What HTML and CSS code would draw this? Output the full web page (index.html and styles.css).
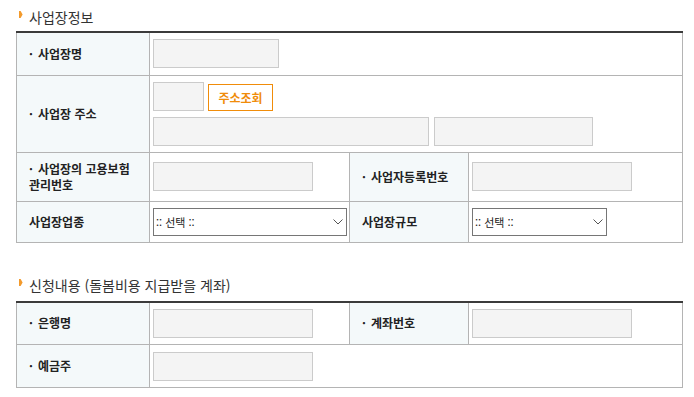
FILE: index.html
```html
<!DOCTYPE html>
<html lang="ko">
<head>
<meta charset="utf-8">
<title>사업장정보</title>
<link rel="stylesheet" href="styles.css">
</head>
<body>
<div class="page">
  <h2 class="sec-title"><svg class="mark" width="4" height="7" viewBox="0 0 4 7"><path d="M0 0H1.6L3.6 3.5L1.6 7H0Z" fill="#f39a2c"/></svg>사업장정보</h2>
  <table class="form">
    <colgroup><col class="c1"><col class="c2"><col class="c3"><col class="c4"></colgroup>
    <tr class="r1 first">
      <th><span class="dot">·</span>사업장명</th>
      <td colspan="3"><input class="inp w-name" type="text"></td>
    </tr>
    <tr class="r2">
      <th><span class="dot">·</span>사업장 주소</th>
      <td colspan="3">
        <div class="addr">
          <div class="addr-line"><input class="inp w-zip" type="text"><button class="btn-find" type="button">주소조회</button></div>
          <div class="addr-line"><input class="inp w-addr1" type="text"><input class="inp w-addr2" type="text"></div>
        </div>
      </td>
    </tr>
    <tr class="r3">
      <th><span class="dot">·</span>사업장의 고용보험<br>관리번호</th>
      <td><input class="inp w-mid" type="text"></td>
      <th><span class="dot">·</span>사업자등록번호</th>
      <td><input class="inp w-mid" type="text"></td>
    </tr>
    <tr class="r4">
      <th>사업장업종</th>
      <td><div class="sel w-sel1"><select><option>:: 선택 ::</option></select><svg class="chev" width="10" height="6" viewBox="0 0 10 6"><path d="M0.5 0.5L5 5L9.5 0.5" fill="none" stroke="#555" stroke-width="1"/></svg></div></td>
      <th>사업장규모</th>
      <td><div class="sel w-sel2"><select><option>:: 선택 ::</option></select><svg class="chev" width="10" height="6" viewBox="0 0 10 6"><path d="M0.5 0.5L5 5L9.5 0.5" fill="none" stroke="#555" stroke-width="1"/></svg></div></td>
    </tr>
  </table>

  <h2 class="sec-title sec-2"><svg class="mark" width="4" height="7" viewBox="0 0 4 7"><path d="M0 0H1.6L3.6 3.5L1.6 7H0Z" fill="#f39a2c"/></svg>신청내용 (돌봄비용 지급받을 계좌)</h2>
  <table class="form">
    <colgroup><col class="c1"><col class="c2"><col class="c3"><col class="c4"></colgroup>
    <tr class="r1 first">
      <th><span class="dot">·</span>은행명</th>
      <td><input class="inp w-mid" type="text"></td>
      <th><span class="dot">·</span>계좌번호</th>
      <td><input class="inp w-mid" type="text"></td>
    </tr>
    <tr class="r5">
      <th><span class="dot">·</span>예금주</th>
      <td colspan="3"><input class="inp w-mid" type="text"></td>
    </tr>
  </table>
</div>
</body>
</html>
```

FILE: styles.css
```css
* { box-sizing: border-box; }
html, body { margin: 0; padding: 0; background: #fff; }
body {
  font-family: "Noto Sans CJK KR", "Noto Sans", sans-serif;
  color: #222;
}
.page {
  padding: 8px 12px 0 16px;
  width: 694px;
}
.sec-title {
  display: flex;
  align-items: center;
  height: 18px;
  margin: 0 0 5px 0;
  padding-left: 3px;
  font-size: 14px;
  font-weight: 400;
  color: #333;
  line-height: 18px;
}
.sec-2 { margin-top: 33px; margin-bottom: 7px; }
.mark { margin-right: 6px; margin-top: -5px; flex: none; }

.form {
  width: 666px;
  table-layout: fixed;
  border-collapse: collapse;
  border-top: 2px solid #3b3b3b;
}
.c1 { width: 133px; }
.c2 { width: 200px; }
.c3 { width: 119px; }
.c4 { width: 214px; }
.form th, .form td {
  border: 1px solid #b4b4b4;
  padding: 0 0 0 3px;
  vertical-align: middle;
}
.form th {
  background: #f4f9fa;
  text-align: left;
  font-size: 12px;
  font-weight: 700;
  line-height: 16px;
  padding-left: 12px;
  color: #222;
}
.form tr.r1 { height: 42px; }
.form tr.first { height: 43px; }
.form tr.r2 { height: 77px; }
.form tr.r3 { height: 49px; }
.form tr.r4 { height: 41px; }
.form tr.r5 { height: 43px; }
.dot { display: inline-block; width: 9px; }

.inp {
  display: block;
  height: 29px;
  border: 1px solid #cbcbcb;
  background: #f4f4f4;
  margin: 0;
  padding: 0 4px;
  font: inherit;
}
.w-name { width: 126px; }
.w-zip { width: 51px; }
.w-addr1 { width: 276px; }
.w-addr2 { width: 159px; }
.w-mid { width: 160px; }

.addr { display: flex; flex-direction: column; gap: 6px; }
.addr-line { display: flex; align-items: flex-end; gap: 4px; }
.addr-line + .addr-line { gap: 5px; }
.btn-find {
  width: 65px;
  height: 27px;
  border: 1px solid #f08c0a;
  background: #fff;
  color: #f08c0a;
  font-family: inherit;
  font-size: 12px;
  font-weight: 700;
  padding: 0;
  margin: 0;
  line-height: 25px;
  cursor: pointer;
}

.sel { position: relative; height: 28px; }
.w-sel1 { width: 194px; }
.w-sel2 { width: 135px; }
.sel select {
  -webkit-appearance: none;
  appearance: none;
  width: 100%;
  height: 100%;
  border: 1px solid #767676;
  border-radius: 0;
  background: #fff;
  color: #222;
  font-family: inherit;
  font-size: 11px;
  padding: 0 0 0 2px;
  margin: 0;
}
.chev {
  position: absolute;
  right: 4px;
  top: 11px;
  pointer-events: none;
}
```
